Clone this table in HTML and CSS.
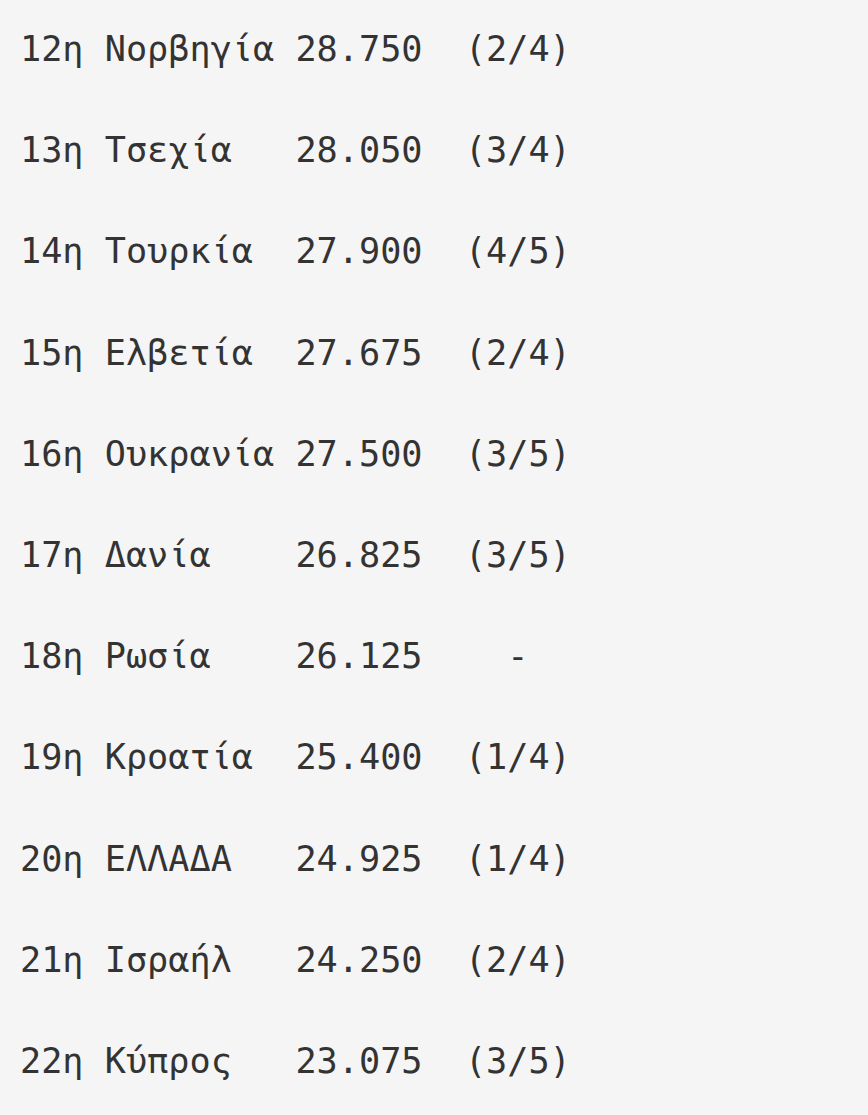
FILE: index.html
```html
<!DOCTYPE html>
<html lang="el">
<head>
<meta charset="utf-8">
<link rel="stylesheet" href="styles.css">
</head>
<body>
<div class="table">
<div class="row">12η Νορβηγία 28.750  (2/4)</div>
<div class="row">13η Τσεχία   28.050  (3/4)</div>
<div class="row">14η Τουρκία  27.900  (4/5)</div>
<div class="row">15η Ελβετία  27.675  (2/4)</div>
<div class="row">16η Ουκρανία 27.500  (3/5)</div>
<div class="row">17η Δανία    26.825  (3/5)</div>
<div class="row">18η Ρωσία    26.125    -</div>
<div class="row">19η Κροατία  25.400  (1/4)</div>
<div class="row">20η ΕΛΛΑΔΑ   24.925  (1/4)</div>
<div class="row">21η Ισραήλ   24.250  (2/4)</div>
<div class="row">22η Κύπρος   23.075  (3/5)</div>
</div>
</body>
</html>
```
FILE: styles.css
```css
html, body {
  margin: 0;
  padding: 0;
  background: #f5f5f5;
}
.table {
  margin-top: -2px;
  padding-left: 20px;
  font-family: "DejaVu Sans Mono", "Liberation Mono", monospace;
  font-size: 35.2px;
  color: #333333;
}
.row {
  white-space: pre;
  line-height: 101.2px;
}
```
